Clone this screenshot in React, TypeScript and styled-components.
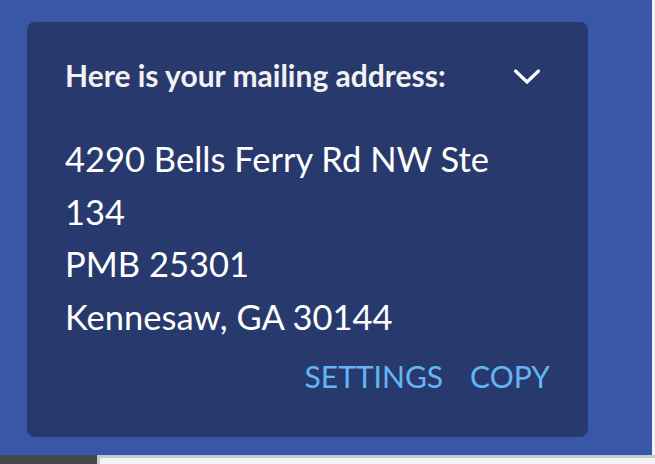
import React from "react";
import styled, { createGlobalStyle } from "styled-components";

const Global = createGlobalStyle`
  html, body { margin: 0; padding: 0; background: #f3f3f3; overflow: hidden; }
  body { font-family: Lato, "Open Sans", sans-serif; }
`;

const Page = styled.div`
  width: 655px;
  height: 464px;
  display: flex;
  flex-direction: column;
`;

const Stage = styled.div`
  width: 652px;
  height: 455px;
  background: #3857a6;
  padding: 22px 0 0 27px;
  box-sizing: border-box;
`;

const Card = styled.section`
  width: 561px;
  height: 415px;
  box-sizing: border-box;
  background: #283a6d;
  border-radius: 8px;
  padding: 29px 38px 0 38px;
  display: flex;
  flex-direction: column;
`;

const Header = styled.div`
  display: flex;
  align-items: center;
  justify-content: space-between;
  height: 48px;
`;

const Title = styled.h2`
  margin: 0;
  font-family: Lato, sans-serif;
  font-weight: 700;
  font-size: 30px;
  line-height: 36px;
  color: #f2f2f4;
  white-space: nowrap;
`;

const IconButton = styled.button`
  width: 48px;
  height: 48px;
  margin-right: -1px;
  padding: 0;
  border: none;
  background: transparent;
  display: flex;
  align-items: center;
  justify-content: center;
  color: #ffffff;
  cursor: pointer;
  position: relative;
  top: 2px;
`;

const Address = styled.address`
  margin: 34px 0 0 0;
  font-style: normal;
  font-family: Lato, sans-serif;
  font-size: 34.5px;
  line-height: 52.5px;
  color: #ffffff;
  max-width: 460px;
`;

const Actions = styled.div`
  display: flex;
  justify-content: flex-end;
  gap: 27px;
  margin-top: 9px;
`;

const TextButton = styled.button`
  padding: 0;
  border: none;
  background: transparent;
  font-family: Lato, sans-serif;
  font-size: 30px;
  line-height: 48px;
  height: 48px;
  color: #64b5f6;
  text-transform: uppercase;
  cursor: pointer;
`;

const Bottom = styled.div`
  flex: 1;
  display: flex;
`;

const DarkTab = styled.div`
  width: 97px;
  background: #474747;
`;

const LightPanel = styled.div`
  flex: 1;
  background: #f3f3f3;
  border-top: 3px solid #c8c8c8;
  border-left: 3px solid #c8c8c8;
`;

const Chevron = () => (
  <svg width="28" height="18" viewBox="0 0 28 18" fill="none">
    <path d="M2.5 3 L14 14 L25.5 3" stroke="currentColor" strokeWidth="3.2" strokeLinecap="round" strokeLinejoin="miter" />
  </svg>
);

export default function App() {
  return (
    <Page>
      <Global />
      <Stage>
        <Card>
          <Header>
            <Title>Here is your mailing address:</Title>
            <IconButton aria-label="Collapse">
              <Chevron />
            </IconButton>
          </Header>
          <Address>
            4290 Bells Ferry Rd NW Ste 134
            <br />
            PMB 25301
            <br />
            Kennesaw, GA 30144
          </Address>
          <Actions>
            <TextButton>Settings</TextButton>
            <TextButton>Copy</TextButton>
          </Actions>
        </Card>
      </Stage>
      <Bottom>
        <DarkTab />
        <LightPanel />
      </Bottom>
    </Page>
  );
}
